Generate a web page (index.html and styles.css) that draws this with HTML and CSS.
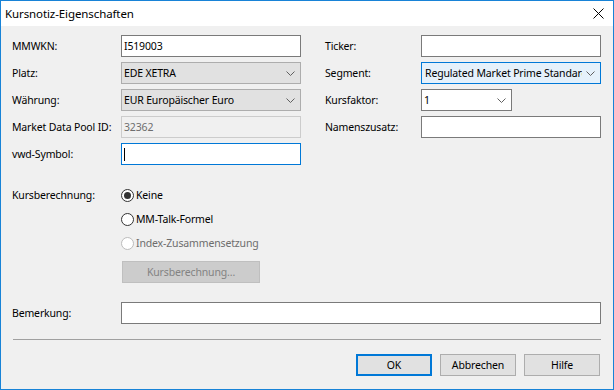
FILE: index.html
```html
<!DOCTYPE html>
<html lang="de">
<head>
    <meta charset="UTF-8">
    <meta name="viewport" content="width=device-width, initial-scale=1.0">
    <title>Kursnotiz-Eigenschaften</title>
    <link rel="stylesheet" href="styles.css">
</head>
<body>
    <div class="window">
        <div class="titlebar">
            <span class="title">Kursnotiz-Eigenschaften</span>
            <svg class="close" width="11" height="11" viewBox="0 0 11 11">
                <path d="M0.5 0.5 L10.5 10.5 M10.5 0.5 L0.5 10.5" stroke="#000" stroke-width="1" fill="none"/>
            </svg>
        </div>

        <div class="dialog">
            <div class="fields">
                <span class="label">MMWKN:</span>
                <div class="edit">I519003</div>
                <span class="label">Ticker:</span>
                <div class="edit"></div>

                <span class="label">Platz:</span>
                <div class="combo"><span class="value">EDE XETRA</span><svg class="arrow" width="9" height="5" viewBox="0 0 9 5"><path d="M0.5 0.5 L4.5 4.5 L8.5 0.5" stroke="#606060" fill="none"/></svg></div>
                <span class="label">Segment:</span>
                <div class="combo focused"><span class="value">Regulated Market Prime Standard</span><svg class="arrow" width="9" height="5" viewBox="0 0 9 5"><path d="M0.5 0.5 L4.5 4.5 L8.5 0.5" stroke="#606060" fill="none"/></svg></div>

                <span class="label">Währung:</span>
                <div class="combo"><span class="value">EUR Europäischer Euro</span><svg class="arrow" width="9" height="5" viewBox="0 0 9 5"><path d="M0.5 0.5 L4.5 4.5 L8.5 0.5" stroke="#606060" fill="none"/></svg></div>
                <span class="label">Kursfaktor:</span>
                <div class="combo editable short"><span class="value">1</span><svg class="arrow" width="9" height="5" viewBox="0 0 9 5"><path d="M0.5 0.5 L4.5 4.5 L8.5 0.5" stroke="#606060" fill="none"/></svg></div>

                <span class="label">Market Data Pool ID:</span>
                <div class="edit disabled">32362</div>
                <span class="label">Namenszusatz:</span>
                <div class="edit"></div>

                <span class="label">vwd-Symbol:</span>
                <div class="edit active"><span class="caret"></span></div>
            </div>

            <div class="calc">
                <span class="label">Kursberechnung:</span>
                <div class="options">
                    <div class="radio checked"><span class="dot"></span>Keine</div>
                    <div class="radio"><span class="dot"></span>MM-Talk-Formel</div>
                    <div class="radio disabled"><span class="dot"></span>Index-Zusammensetzung</div>
                    <div class="btn calc-btn disabled">Kursberechnung...</div>
                </div>
            </div>

            <div class="remark">
                <span class="label">Bemerkung:</span>
                <div class="edit wide"></div>
            </div>

            <div class="separator"></div>

            <div class="actions">
                <div class="btn default">OK</div>
                <div class="btn">Abbrechen</div>
                <div class="btn">Hilfe</div>
            </div>
        </div>
    </div>
</body>
</html>
```

FILE: styles.css
```css
body {
    margin: 0;
    font-family: "Noto Sans", sans-serif;
    font-size: 10.5px;
    letter-spacing: -0.15px;
    color: #000;
    background: #f0f0f0;
}
.window {
    width: 614px;
    height: 390px;
    box-sizing: border-box;
    border: 1px solid #1883d7;
    background: #f0f0f0;
    display: flex;
    flex-direction: column;
}
.titlebar {
    height: 25px;
    background: #fff;
    display: flex;
    align-items: center;
    justify-content: space-between;
    padding: 0 9px 0 4px;
    flex-shrink: 0;
}
.title {
    font-size: 11.5px;
    letter-spacing: -0.1px;
    margin-top: -1px;
}
.close {
    display: block;
}
.dialog {
    padding: 9px 12px 0 11px;
    display: flex;
    flex-direction: column;
}
.fields {
    display: grid;
    grid-template-columns: 109px 204px 96px 180px;
    grid-auto-rows: 22px;
    row-gap: 5px;
    align-items: center;
}
.label {
    white-space: nowrap;
    line-height: 22px;
}
.edit,
.combo {
    width: 180px;
    height: 22px;
    box-sizing: border-box;
    border: 1px solid #7a7a7a;
    background: #fff;
    padding: 0 2px;
    line-height: 20px;
    display: flex;
    align-items: center;
    overflow: hidden;
    white-space: nowrap;
}
.edit.disabled {
    border-color: #cccccc;
    background: #f0f0f0;
    color: #6d6d6d;
}
.edit.active {
    border-color: #0078d7;
}
.caret {
    width: 1px;
    height: 13px;
    background: #000;
}
.combo {
    background: #e1e1e1;
    border-color: #adadad;
    padding: 0 5px 0 2px;
}
.combo.focused {
    background: #e5f1fb;
    border-color: #0078d7;
    padding-left: 3px;
}
.combo.editable {
    background: #fff;
    border-color: #7a7a7a;
}
.combo.short {
    width: 91px;
}
.combo .value {
    flex: 1;
    overflow: hidden;
}
.arrow {
    display: block;
    margin-left: 4px;
    flex-shrink: 0;
}
.calc {
    display: grid;
    grid-template-columns: 109px 1fr;
    margin-top: 18px;
}
.calc > .label {
    line-height: 24px;
}
.options {
    display: flex;
    flex-direction: column;
    align-items: flex-start;
}
.radio {
    height: 24px;
    display: flex;
    align-items: center;
    gap: 2px;
}
.radio .dot {
    width: 13px;
    height: 13px;
    box-sizing: border-box;
    border: 1px solid #333;
    border-radius: 50%;
    background: #fff;
    display: flex;
    align-items: center;
    justify-content: center;
}
.radio.checked .dot::after {
    content: "";
    width: 7px;
    height: 7px;
    border-radius: 50%;
    background: #333;
}
.radio.disabled {
    color: #6d6d6d;
}
.radio.disabled .dot {
    border-color: #bcbcbc;
}
.btn {
    width: 76px;
    height: 22px;
    box-sizing: border-box;
    border: 1px solid #adadad;
    background: #e1e1e1;
    display: flex;
    align-items: center;
    justify-content: center;
}
.btn.default {
    border: 2px solid #0078d7;
}
.btn.disabled {
    background: #cccccc;
    border-color: #bfbfbf;
    color: #838383;
}
.calc-btn {
    width: 138px;
    margin: 6px 0 0 1px;
}
.remark {
    display: grid;
    grid-template-columns: 109px 1fr;
    align-items: center;
    margin-top: 19px;
}
.edit.wide {
    width: 480px;
}
.separator {
    height: 1px;
    background: #a0a0a0;
    margin: 15px 0 0 1px;
}
.actions {
    display: flex;
    justify-content: flex-end;
    gap: 8px;
    margin: 14px 1px 0 0;
}
```
